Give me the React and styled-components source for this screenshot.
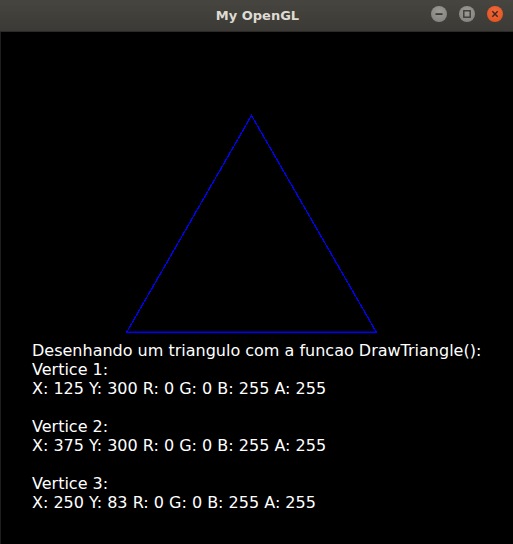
import React from "react";
import styled, { createGlobalStyle } from "styled-components";

const Global = createGlobalStyle`
  html, body { margin: 0; padding: 0; background: #000; }
  body { width: 513px; height: 544px; overflow: hidden; }
`;

const Window = styled.div`
  width: 513px;
  height: 544px;
  display: flex;
  flex-direction: column;
  background: #000;
`;

const TitleBar = styled.div`
  height: 32px;
  flex: none;
  display: grid;
  grid-template-columns: 1fr auto 1fr;
  align-items: center;
  background: linear-gradient(#46453f, #3b3a36);
  border-bottom: 1px solid #2b2a27;
  box-sizing: border-box;
`;

const Title = styled.div`
  grid-column: 2;
  font-family: "DejaVu Sans", sans-serif;
  font-weight: bold;
  font-size: 13px;
  color: #dfdbd2;
  padding-left: 2px;
  margin-top: -1px;
`;

const Controls = styled.div`
  grid-column: 3;
  justify-self: end;
  display: flex;
  gap: 12px;
  padding-right: 10px;
  margin-top: -3px;
`;

const Circle = styled.div`
  width: 16px;
  height: 16px;
  border-radius: 50%;
  display: flex;
  align-items: center;
  justify-content: center;
  background: ${(p) =>
    p.$close
      ? "radial-gradient(circle at 50% 35%, #f2683a, #e0501c)"
      : "radial-gradient(circle at 50% 35%, #9c9b96, #7f7e7a)"};
`;

const Canvas = styled.div`
  flex: 1;
  display: flex;
  flex-direction: column;
  border-left: 1px solid #1e1e1e;
`;

const Drawing = styled.svg`
  display: block;
  flex: none;
`;

const Info = styled.div`
  padding: 7px 0 0 31px;
  font-family: "DejaVu Sans", sans-serif;
  font-size: 16px;
  line-height: 19px;
  color: #ffffff;
  white-space: pre;
`;

const Line = styled.div`
  height: 19px;
`;

const lines = [
  "Desenhando um triangulo com a funcao DrawTriangle():",
  "Vertice 1:",
  "X: 125 Y: 300 R: 0 G: 0 B: 255 A: 255",
  "",
  "Vertice 2:",
  "X: 375 Y: 300 R: 0 G: 0 B: 255 A: 255",
  "",
  "Vertice 3:",
  "X: 250 Y: 83 R: 0 G: 0 B: 255 A: 255",
];

export default function App() {
  return (
    <>
      <Global />
      <Window>
        <TitleBar>
          <Title>My OpenGL</Title>
          <Controls>
            <Circle>
              <svg width="16" height="16" viewBox="0 0 16 16">
                <rect x="4.5" y="7.2" width="7" height="1.8" fill="#3c3b37" />
              </svg>
            </Circle>
            <Circle>
              <svg width="16" height="16" viewBox="0 0 16 16">
                <rect x="4.8" y="4.8" width="6.4" height="6.4" fill="none" stroke="#3c3b37" strokeWidth="1.4" />
              </svg>
            </Circle>
            <Circle $close>
              <svg width="16" height="16" viewBox="0 0 16 16">
                <path d="M5.3 5.3 L10.7 10.7 M10.7 5.3 L5.3 10.7" stroke="#3c2a22" strokeWidth="1.5" />
              </svg>
            </Circle>
          </Controls>
        </TitleBar>
        <Canvas>
          <Drawing width="512" height="302" viewBox="0 0 512 302">
            <polygon
              points="125.5,300.5 375.5,300.5 250.5,83.5"
              fill="none"
              stroke="#0000ff"
              strokeWidth="1.2"
              shapeRendering="crispEdges"
            />
            <line x1="125" y1="300" x2="376" y2="300" stroke="#0000ff" strokeWidth="1" />
          </Drawing>
          <Info>
            {lines.map((l, i) => (
              <Line key={i}>{l}</Line>
            ))}
          </Info>
        </Canvas>
      </Window>
    </>
  );
}
